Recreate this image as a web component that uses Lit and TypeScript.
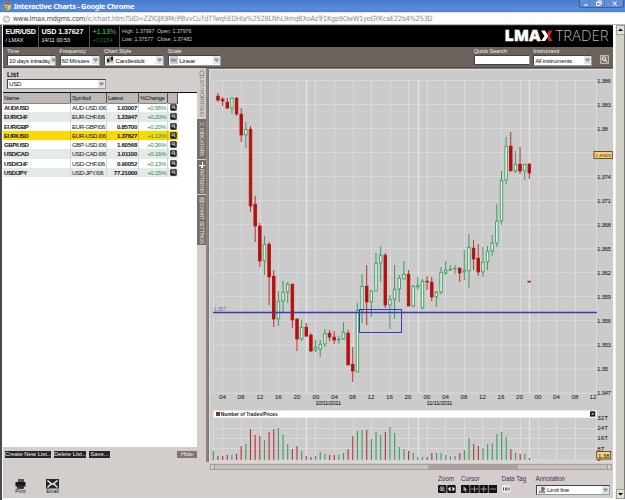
import { LitElement, html, svg, css } from "lit";
import { customElement, property } from "lit/decorators.js";

type Candle = [color: "r" | "g", high: number, low: number, top: number, bottom: number];

const CANDLES: Candle[] = [
  ["r", 93, 102, 96, 100], ["r", 97, 106, 99, 101], ["r", 98, 109, 102, 108], ["g", 97, 114, 98, 108],
  ["r", 97, 116, 98, 114], ["r", 108, 142, 114, 135], ["g", 122, 148, 129, 135], ["r", 126, 212, 129, 206],
  ["r", 196, 242, 204, 226], ["r", 223, 267, 226, 261], ["g", 236, 275, 244, 261], ["r", 242, 305, 244, 277],
  ["r", 270, 327, 276, 319], ["g", 291, 326, 301, 319], ["g", 281, 312, 292, 301], ["g", 282, 303, 284, 292],
  ["r", 284, 328, 284, 320], ["r", 318, 351, 319, 339], ["g", 320, 341, 327, 339], ["r", 323, 337, 327, 336],
  ["r", 333, 352, 335, 351], ["g", 340, 352, 347, 350], ["g", 340, 357, 344, 349], ["g", 329, 347, 333, 344],
  ["r", 330, 341, 333, 337], ["r", 331, 344, 337, 340], ["g", 336, 344, 339, 340], ["g", 322, 340, 332, 339],
  ["r", 330, 365, 333, 365], ["r", 347, 382, 364, 371], ["g", 303, 372, 310, 372], ["g", 274, 323, 286, 310],
  ["r", 265, 325, 286, 302], ["g", 290, 317, 291, 302], ["g", 253, 291, 263, 291], ["g", 246, 282, 255, 263],
  ["r", 253, 308, 255, 305], ["g", 295, 329, 299, 305], ["g", 265, 319, 289, 299], ["g", 275, 302, 278, 289],
  ["g", 261, 279, 274, 279], ["r", 270, 306, 274, 306], ["g", 285, 307, 286, 306], ["g", 277, 290, 285, 287],
  ["g", 279, 309, 281, 308], ["r", 276, 290, 281, 282], ["r", 277, 301, 282, 297], ["g", 291, 307, 292, 297],
  ["g", 267, 294, 272, 292], ["g", 261, 275, 270, 273], ["g", 265, 271, 269, 270], ["g", 265, 274, 268, 269],
  ["r", 267, 282, 268, 273], ["g", 250, 280, 270, 272], ["g", 234, 288, 247, 271], ["r", 240, 270, 248, 259],
  ["r", 244, 276, 258, 272], ["g", 247, 277, 262, 272], ["g", 246, 270, 251, 262], ["g", 235, 256, 243, 251],
  ["g", 204, 247, 221, 243], ["g", 171, 225, 180, 221], ["g", 137, 184, 146, 180], ["r", 132, 171, 146, 171],
  ["g", 151, 173, 164, 171], ["r", 147, 174, 164, 171], ["g", 164, 180, 164, 171], ["r", 163, 179, 164, 173],
];

const VOLUMES =
  "g9 r4 r4 r5 g5 r6 r14 g16 r31 r25 r24 g20 r28 r31 g32 g25 g16 r11 r14 g9 r4 r3 g4 g8 g6 r5 r5 g5 g7 r11 r24 g29 g30 r30 g21 g28 g25 r28 g33 g27 g13 g11 r9 g7 g3 g3 r3 r7 g7 g7 g5 g4 g4 r7 g10 g22 r16 r14 g12 g16 g17 g26 g28 g23 r11 g7 r6 g6 r2".split(" ");

const GRID_X = [213.5, 222.5, 241.5, 260.5, 278.5, 297.5, 315.5, 334.5, 353.5, 371.5, 390.5, 408.5, 427.5, 445.5, 464.5, 482.5, 501.5, 520.5, 538.5, 556.5, 575.5, 596.5];
const DAY_X = [306.5, 418.5, 529.5];
const HOURS = ["04", "08", "12", "16", "20", "00", "04", "08", "12", "16", "20", "00", "04", "08", "12", "16", "20", "00", "04", "08", "12"];
const HOUR_X = [222.5, 241, 260, 278.3, 297, 316, 334.5, 352.5, 371, 389.5, 408, 427, 445.5, 464, 482.5, 501, 519.5, 538, 556.5, 575, 593];
const PRICES = ["1.386", "1.383", "1.38", "1.377", "1.374", "1.371", "1.368", "1.365", "1.362", "1.359", "1.356", "1.353", "1.35", "1.347"];

const ROWS = [
  ["AUD/USD", "AUD-USD.I06", "1.03007", "+0.95%"],
  ["EUR/CHF", "EUR-CHF.I06", "1.23947", "+0.20%"],
  ["EUR/GBP", "EUR-GBP.I06", "0.85700", "+0.20%"],
  ["EUR/USD", "EUR-USD.I06", "1.37627", "+1.13%"],
  ["GBP/USD", "GBP-USD.I06", "1.60568", "+0.36%"],
  ["USD/CAD", "USD-CAD.I06", "1.01100", "+0.16%"],
  ["USD/CHF", "USD-CHF.I06", "0.90052", "+0.13%"],
  ["USD/JPY", "USD-JPY.I06", "77.21000", "+0.15%"],
];

@customElement("price-chart")
export class PriceChart extends LitElement {
  static styles = css`
    :host { display: block; width: 405px; height: 394px; }
    svg { display: block; font-family: "Liberation Sans", Arial, sans-serif; }
    .bg { fill: #cbcbcb; }
    .frame { fill: none; stroke: #7d746e; }
    .grid { stroke: #dadada; stroke-width: 1; }
    .day { stroke: #e6e6e6; stroke-width: 1.4; }
    .r { stroke: #bb3030; fill: #b80d0d; }
    rect.r { stroke: #b41212; }
    .g { stroke: #3f9c62; fill: #e6f1e8; }
    .axis { font-size: 6.2px; fill: #111; }
    .limit { stroke: #3a3ab4; stroke-width: 1.3; fill: none; }
    .zone { stroke: #3a3ab4; stroke-width: 1; fill: none; }
    .tiny { font-size: 5px; fill: #777; }
    .tag { fill: #fbd07c; stroke: #5b431c; stroke-width: .9; }
    .price { font-size: 4.4px; }
    .head { font-size: 5.9px; font-weight: bold; fill: #222; }
  `;

  private candle([c, high, low, top, bottom]: Candle, i: number) {
    const x = 218 + i * 4.647;
    return svg`<line class=${c} x1=${x} x2=${x} y1=${high} y2=${low} stroke-width="1"/>
      <rect class=${c} x=${x - 1.25} y=${top + 0.3} width="2.5" height=${Math.max(bottom - top - 0.4, 0.5)} stroke-width=".9"/>`;
  }

  render() {
    return html`<svg width="405" height="394" viewBox="208 68 405 394">
      <rect class="bg" x="208" y="68" width="405" height="394"/>
      <path class="frame" d="M208.5 462V68.5H613"/>
      <path stroke="#e4e2e0" fill="none" d="M209.5 461.5V69.5H613M209 461.5H613"/>
      ${PRICES.map((_, i) => svg`<line class="grid" x1="213" x2="597" y1=${80.5 + i * 24.04} y2=${80.5 + i * 24.04}/>`)}
      ${GRID_X.map((x) => svg`<line class="grid" x1=${x} x2=${x} y1="80" y2="393"/><line class="grid" x1=${x} x2=${x} y1="418" y2="460"/>`)}
      ${DAY_X.map((x) => svg`<line class="day" x1=${x} x2=${x} y1="80" y2="393"/><line class="day" x1=${x} x2=${x} y1="418" y2="460"/>`)}
      ${[428.5, 438.5, 448.5, 459.5].map((y) => svg`<line class="grid" x1="213" x2="597" y1=${y} y2=${y}/>`)}
      ${CANDLES.map((c, i) => this.candle(c, i))}
      <rect x="527.5" y="280.8" width="3.5" height="1.7" fill="#b81818"/>
      <path class="limit" d="M213 312.5H597"/>
      <rect class="zone" x="359.5" y="309.5" width="42" height="23"/>
      <text class="tiny" x="214" y="311.3" textLength="12">1.357</text>
      ${PRICES.map((p, i) => svg`<text class="axis" x="597" y=${82.6 + i * 24.04} textLength=${p.length === 5 ? 14 : 11}>${p}</text>`)}
      <rect class="tag" x="594" y="151.5" width="18.3" height="7"/>
      <text class="axis price" x="595.5" y="156.8" textLength="15.3">1.37623</text>
      ${HOURS.map((h, i) => svg`<text class="axis" text-anchor="middle" x=${HOUR_X[i]} y="399">${h}</text>`)}
      <text class="axis" x="315.3" y="405.2" textLength="26">10/11/2011</text>
      <text class="axis" x="426.5" y="405.2" textLength="26">11/11/2011</text>
      <rect x="213.5" y="410.5" width="383.5" height="7.2" fill="#fff"/>
      <rect x="216" y="412" width="4" height="4" fill="#a02020"/>
      <path d="M216 414h4v2h-4z" fill="#1c6b35"/>
      <text class="head" x="220.7" y="416.2" textLength="57" lengthAdjust="spacingAndGlyphs">Number of Trades/Prices</text>
      <rect x="590" y="411.3" width="5.3" height="5.3" fill="#151515"/>
      <path d="M591.5 412.8l2.3 2.3m0-2.3l-2.3 2.3" stroke="#fff" stroke-width=".7"/>
      ${VOLUMES.map((v, i) => {
        const x = 213.3 + i * 4.65;
        const h = Number(v.slice(1));
        return svg`<line class=${v[0]} x1=${x} x2=${x} y1=${460 - h} y2="460" stroke-width="1.1"/>`;
      })}
      ${["32T", "24T", "16T", "8T", "0"].map((t, i) => svg`<text class="axis" x="597.3" y=${419.6 + i * 10.35}>${t}</text>`)}
      <rect class="tag" x="596.7" y="451.5" width="14" height="7.5"/>
      <text class="axis" x="598" y="457.6" textLength="11.5">1.38</text>
    </svg>`;
  }
}

@customElement("drop-box")
export class DropBox extends LitElement {
  @property() value = "";
  @property() icon = "";
  static styles = css`
    :host { display: flex; align-items: center; box-sizing: border-box; height: 10.5px; background: #fff; border: 1px solid #444; border-right-color: #999; border-bottom-color: #999;
      font: 6.2px "Liberation Sans", Arial, sans-serif; letter-spacing: -.25px; color: #111; white-space: nowrap; overflow: hidden; padding-left: 1px; }
    .text { flex: 1; }
    .arrow { width: 7px; height: 8px; background: #dce6e8; display: block; flex: none; }
    .ico { width: 8px; height: 8px; margin-right: 1.5px; display: block; flex: none; }
  `;
  render() {
    return html`
      ${this.icon === "candle" ? html`<svg class="ico" viewBox="0 0 8 8"><rect width="8" height="8" fill="#ddd"/><path d="M2 2v5M4 1v5M6 0v6" stroke="#222" stroke-width=".8"/><path d="M1 3h2v3H1zM5 1h2v3H5z" fill="#222"/></svg>` : ""}
      ${this.icon === "abc" ? html`<svg class="ico" viewBox="0 0 8 8"><rect width="8" height="8" fill="#c9d3da"/><path d="M.8 3h1.6v2.4H1V4.2h1.4M3.3 1.8v3.6h1.4V3.4H3.3M7.2 3.2H5.6v2.2h1.6" fill="none" stroke="#67737c" stroke-width=".6"/></svg>` : ""}
      ${this.icon === "line" ? html`<svg class="ico" viewBox="0 0 8 8"><rect width="8" height="8" fill="#dde3e6"/><path d="M1 6h6M4 1v4M4 2h2v2H4" stroke="#222" stroke-width=".8" fill="none"/></svg>` : ""}
      <span class="text">${this.value}</span>
      <svg class="arrow" viewBox="0 0 7 8"><path d="M1.8 3h3.6L3.6 5.6z" fill="#cfd8da" stroke="#4c5c60" stroke-width=".7"/></svg>`;
  }
}

@customElement("app-root")
export class AppRoot extends LitElement {
  static styles = css`
    :host { display: block; width: 625px; height: 500px; overflow: hidden; background: #fff; font: 6.5px/8px "Liberation Sans", Arial, sans-serif; color: #111; }
    * { box-sizing: border-box; }
    .window { height: 500px; display: grid; grid-template-rows: 12px 13px 475px; white-space: nowrap; }
    .title { display: flex; align-items: center; background: linear-gradient(#4478cc, #5b8ddd 70%, #4f7fce); color: #fff; padding-left: 3px; }
    .title svg { width: 8px; height: 9px; margin-right: 3px; }
    .title b { flex: 1; font: bold 7.3px/10px "Noto Sans", sans-serif; letter-spacing: -.24px; }
    .controls { display: flex; align-self: flex-start; height: 8px; width: 45px; margin-right: 1px; border: 1px solid #3561a9; border-top: 0; border-radius: 0 0 3px 3px; background: #638fd7; }
    .controls svg { width: 43px; height: 7px; margin: 0; }
    .url { display: flex; align-items: center; background: #fdfdfe; border-bottom: 1px solid #b7b7bb; border-top: 1px solid #dce6f5; padding-left: 3px; color: #8a8a8a; font: 7.2px/10px "DejaVu Sans Condensed", "DejaVu Sans", sans-serif; font-stretch: condensed; letter-spacing: -.17px; }
    .url svg { width: 7px; height: 8px; margin-right: 3px; }
    .host { color: #444; }
    .page { display: grid; grid-template-columns: 610px 2px 10px; background: #fff; border-left: 2px solid #484a50; padding-left: 1px; }
    .main { height: 473px; background: #d3cecb; border-top: 1px solid #2a2a2a; }
    .ticker { height: 21px; background: #000; color: #e9e9e9; display: flex; }
    .cell { padding: 0 2.5px; border-right: 1px solid #555; font-size: 5.5px; line-height: 8.5px; }
    .cell:first-child { width: 36px; } .cell:nth-child(2) { width: 51px; } .cell:nth-child(3) { width: 29.5px; }
    .cell:nth-child(4) { flex: 1; border: 0; font-size: 5.2px; color: #ccc; padding-top: 1px; line-height: 8px; }
    .cell b { display: block; font-size: 7.2px; line-height: 9px; padding-top: 1px; color: #fff; }
    .cell:first-child b { letter-spacing: -.3px; } .cell:nth-child(2) b { letter-spacing: -.12px; }
    .cell:nth-child(3) b { letter-spacing: -.2px; }
    .cell .up { color: #2f9c38; } .up2 { color: #24752b; }
    .pair { display: flex; gap: 2px; } .pair span { width: 33px; }
    .brand { display: block; width: 108px; height: 21px; }
    .tools { height: 21px; background: #6c625c; border-bottom: 1px solid #574e49; display: flex; padding: 1px 4px 0; color: #f1eeec; }
    .field { display: flex; flex-direction: column; line-height: 7px; font-size: 5.8px; letter-spacing: -.12px; }
    .search { height: 10px; background: #fff; border: 1px solid #444; border-right-color: #999; }
    .find { display: block; width: 9px; height: 9px; margin: 7px 0 0 8px; }
    .body { display: grid; grid-template-columns: 194px 11px 405px; height: 379px; }
    .listhead { height: 24px; padding: 3.5px 4px 0; }
    .listhead b { display: block; font-size: 6.5px; line-height: 6px; margin-bottom: 1px; }
    .listhead drop-box { width: 99px; }
    .table { background: #fff; height: 355px; border-top: 1.5px solid #111; }
    .row { display: grid; grid-template-columns: 68px 36px 32px 29px 10px; height: 9.3px; width: 175px; line-height: 9.3px; font-size: 6.1px; }
    .row span { border-right: 1px solid #d5d9d9; padding: 0 1px; letter-spacing: -.33px; }
    .row:nth-child(odd) { background: #e4e9e9; }
    .row.thead { background: #beb8b5; height: 10px; line-height: 10px; }
    .row.thead span { border-right: 1px solid #555; border-bottom: 1px solid #888; letter-spacing: -.3px; }
    .row.sel { background: #fcd800; } .row.sel span { border-color: #dcb800; }
    .row .name { font-weight: bold; letter-spacing: -.48px; }
    .row .sym { letter-spacing: -.38px; }
    .row .last { text-align: right; font-weight: bold; letter-spacing: -.28px; }
    .row .chg { text-align: right; color: #159447; }
    .row svg { width: 7px; height: 7px; margin: 1px 1.5px; display: block; }
    .tabs { height: 394px; border-right: 2px solid #8d847e; display: flex; flex-direction: column; gap: 1px; }
    .tab { display: flex; align-items: center; writing-mode: vertical-rl; width: 9px; background: #786e69; color: #e9e4e1; font-size: 5px; line-height: 9px; letter-spacing: -.25px; gap: 1.5px; padding-top: 1.5px; }
    .tab svg { width: 6px; height: 6px; flex: none; }
    .tab.on { background: #d3cecb; color: #77706b; }
    .lower { display: grid; grid-template-columns: 205px 405px; height: 51px; }
    .left { width: 197px; }
    .buttons { display: flex; gap: 3px; padding: 4px 2px 0; height: 22px; align-items: flex-start; }
    .btn { height: 6.5px; background: #25262a; color: #eee; line-height: 6.5px; font-size: 5.9px; text-align: center; }
    .hide { background: #82756f; margin-left: auto; width: 20px; margin-right: 1px; }
    .acts { display: flex; padding-left: 11px; gap: 20px; margin-top: 8.5px; }
    .act { width: 13px; display: flex; flex-direction: column; align-items: center; font-size: 5px; line-height: 5px; }
    .act svg { width: 13px; height: 11px; }
    .right { margin-top: 15px; display: flex; flex-direction: column; }
    .hbar { height: 6px; background: #c8c2be; border: 1px solid #a49d98; margin: 2px 1px 0 2px; display: flex; }
    .thumb { width: 90px; margin-left: 213px; background: #a9a29e; }
    .end { width: 4px; background: #d3cecb; border-right: 1px solid #999; } .end.r { margin-left: auto; border: 0; border-left: 1px solid #999; }
    .opts { display: flex; padding: 5px 0 0 230px; color: #54285c; font-size: 6.3px; letter-spacing: -.06px; }
    .opt { display: flex; flex-direction: column; line-height: 8px; gap: 1.5px; }
    .opt svg { display: block; height: 8px; }
    .vbar { background: #d2cfc6; border-left: 1px solid #f0eee8; border-right: 1px solid #777; display: flex; flex-direction: column; justify-content: space-between; height: 474px; }
    .vbar svg { width: 9px; height: 10px; display: block; }
    .w-time { width: 49px; } .w-freq { width: 40.5px; margin-left: 3.5px; } .w-style { width: 60px; margin-left: 4px; }
    .w-scale { width: 53px; margin-left: 4px; } .w-search { width: 56px; margin-left: 253px; } .w-instr { width: 59px; margin-left: 3.5px; }
    .t-50 { height: 50px; } .t-40 { height: 40px; } .t-34 { height: 34px; }
    .b-46 { width: 46px; } .b-32 { width: 32px; } .b-21 { width: 21px; }
    .mail { margin-left: -1px; }
    .o-zoom { width: 23px; } .o-cursor { width: 40.5px; } .o-tag { width: 34px; } .o-note { width: 74px; }
  `;

  render() {
    return html`<div class="window">
      <div class="title">
        <svg viewBox="0 0 8 9"><circle cx="4" cy="4.5" r="4" fill="#e9c52b"/><path d="M.5 2.5A4 4 0 0 1 7.5 2.7L4 3z" fill="#d63a2f"/><path d="M.4 2.6A4 4 0 0 0 4 8.5L5 5.5 2.5 5z" fill="#3da34d"/><circle cx="4" cy="4.5" r="1.6" fill="#4b83d8" stroke="#fff" stroke-width=".6"/></svg>
        <b>Interactive Charts - Google Chrome</b>
        <div class="controls"><svg viewBox="0 0 43 7"><path d="M9.500 0v7M24.500 0v7" stroke="#4474bf" opacity=".6"/><path d="M4 5h4M16.500 2.500h3.500v3h-3.500zM18 2.500v-1.500h3.500v3h-1.500M33 1.500l3.500 4M36.500 1.500l-3.500 4" fill="none" stroke="#fff" stroke-width="1"/></svg></div>
      </div>
      <div class="url"><svg viewBox="0 0 7 8"><circle cx="3.500" cy="4" r="3" fill="#fff" stroke="#888" stroke-width=".8"/><path d="M2 2.500l1.500 1-1 2M4 1.500l1 2" stroke="#999" stroke-width=".6" fill="none"/></svg><span class="host">www.lmax.mdgms.com</span>/ic/chart.htm?SID=ZZIGJK9McPBvvCuTdTTwqhEDHIa%252BLNhL9mqBXoAzTr1Kgp9OwW1yoGYKcaE22b4%253D</div>
      <div class="page">
        <div class="main">
          <div class="ticker">
            <div class="cell"><b>EUR/USD</b>/ LMAX</div>
            <div class="cell"><b>USD 1.37627</b>14/11 00:53</div>
            <div class="cell"><b class="up">+1.13%</b><span class="up2">+0.0154</span></div>
            <div class="cell"><div class="pair"><span>High: 1.37997</span><span>Open: 1.37976</span></div><div class="pair"><span>Low: 1.37577</span><span>Close: 1.37482</span></div></div>
            <svg class="brand" viewBox="0 0 108 21"><text x="-.5" y="15.200" font-family="Open Sans" font-weight="800" font-size="15" textLength="36" lengthAdjust="spacingAndGlyphs" fill="#fff" stroke="#fff" stroke-width=".4">LMA</text><path d="M36 4.500h4l3.500 5.500-3.500 5h-4l3.500-5z" fill="#fff"/><path d="M47.500 4.500h-3.500l-2 3 1.500 2.500-1.500 2.500 1.700 2.500h4l-3.200-5z" fill="#d8202a"/><text x="50.500" y="15.200" font-family="Open Sans" font-weight="300" font-size="15" textLength="53" lengthAdjust="spacingAndGlyphs" fill="#bbb">TRADER</text></svg>
          </div>
          <div class="tools">
            <div class="field w-time">Time<drop-box value="10 days intraday"></drop-box></div>
            <div class="field w-freq">Frequency<drop-box value="60 Minutes"></drop-box></div>
            <div class="field w-style">Chart Style<drop-box icon="candle" value="Candlestick"></drop-box></div>
            <div class="field w-scale">Scale<drop-box icon="abc" value="Linear"></drop-box></div>
            <div class="field w-search">Quick Search<div class="search"></div></div>
            <div class="field w-instr">Instrument<drop-box value="All instruments"></drop-box></div>
            <svg class="find" viewBox="0 0 9 9"><path d="M.5.5h8v8h-8z" fill="#857b75" stroke="#c3bbb6"/><circle cx="3.800" cy="3.600" r="1.700" fill="none" stroke="#fff"/><path d="M5 5l2.300 2.300" stroke="#fff"/></svg>
          </div>
          <div class="body">
            <div>
              <div class="listhead"><b>List</b><drop-box value="USD"></drop-box></div>
              <div class="table">
                <div class="row thead"><span>Name</span><span>Symbol</span><span>Latest</span><span>%Change</span><span></span></div>
                ${ROWS.map((r) => html`<div class="row ${r[0] === "EUR/USD" ? "sel" : ""}"><span class="name">${r[0]}</span><span class="sym">${r[1]}</span><span class="last">${r[2]}</span><span class="chg">${r[3]}</span><svg viewBox="0 0 7 7"><rect x=".3" y=".3" width="6.400" height="6.400" rx="1" fill="#151515"/><path d="M2 1.800h2.800v2H2zM4 3.500l1.500 1.800" fill="none" stroke="#eee" stroke-width=".8"/></svg></div>`)}
              </div>
            </div>
            <div class="tabs">
              <div class="tab on t-50"><svg viewBox="0 0 6 6"><path d="M1 5.500V1.500l3-1 1 2v3z" fill="none" stroke="#777" stroke-width=".7"/></svg>LIST / PORTFOLIO</div>
              <div class="tab t-40"><svg viewBox="0 0 6 6"><path d="M.5 1l2 2-2 2M5.500 1l-2 2 2 2" fill="none" stroke="#ddd" stroke-width=".7"/></svg>INDICATORS</div>
              <div class="tab t-34"><svg viewBox="0 0 6 6"><path d="M0 3h3V0h1v3h2v1H4v2H2V4H0z" fill="#fff"/></svg>PATTERNS</div>
              <div class="tab t-50"><svg viewBox="0 0 6 6"><path d="M0 1h6M0 3h6M0 5h6M2 0v6M4 0v6" stroke="#ddd" stroke-width=".6"/></svg>CHART SETTINGS</div>
            </div>
            <price-chart></price-chart>
          </div>
          <div class="lower">
            <div class="left">
              <div class="buttons"><div class="btn b-46">Create New List...</div><div class="btn b-32">Delete List...</div><div class="btn b-21">Save...</div><div class="btn hide">Hide</div></div>
              <div class="acts">
                <div class="act"><svg viewBox="0 0 13 11"><path d="M4 1h6v3H4z" fill="#555"/><path d="M1.500 4h10v4.500h-10z" fill="#17191b"/><path d="M3.500 7h6v3.500h-6z" fill="#303437" stroke="#111" stroke-width=".6"/></svg>Print</div>
                <div class="act mail"><svg viewBox="0 0 13 11"><rect y="1" width="13" height="9.500" fill="#25292b"/><path d="M1.500 2.500l5 4 5-4M1.500 9.500l3.500-3.500M11.500 9.500l-3.500-3.500" stroke="#fff" stroke-width="1.200" fill="none"/></svg>Email</div>
              </div>
            </div>
            <div class="right">
              <div class="hbar"><div class="end"></div><div class="thumb"></div><div class="end r"></div></div>
              <div class="opts">
                <div class="opt o-zoom">Zoom<svg width="18" viewBox="0 0 18 8"><rect width="8.500" height="8" rx="1" fill="#111"/><rect x="9.200" width="8.500" height="8" rx="1" fill="#111"/><circle cx="4" cy="3.700" r="2" fill="none" stroke="#ddd" stroke-width=".8"/><path d="M5.500 5.200L7 6.800M3 3.700h2M4 2.700v2" stroke="#ddd" stroke-width=".7"/><path d="M11 4h1.500M14.500 4h1.500M12.300 2v4l-2-2zM14.700 2v4l2-2z" fill="#fff" stroke="#fff" stroke-width=".4"/></svg></div>
                <div class="opt o-cursor">Cursor<svg width="36" viewBox="0 0 36 8"><path d="M0 0h8.500v8H0zM9.200 0h8.500v8H9.200zM18.400 0h8.500v8h-8.500zM27.600 0h8.400v8h-8.400z" fill="#111"/><path d="M2.500 1l4 4H4.500l1 2-1 .3-1-2-1 1z" fill="#aaa"/><path d="M10 4h7M13.500 1v6M19.500 4h6.500M22.700 1v6M28.700 4h6.300" stroke="#ccc" stroke-width=".7"/></svg></div>
                <div class="opt o-tag">Data Tag<svg width="9" viewBox="0 0 9 8"><rect width="8.500" height="7.500" rx="1" fill="#eee"/><path d="M1.500 2.500v3M3.500 2.500v3M5 2.500v3M7 2.500v3" stroke="#333" stroke-width=".9"/></svg></div>
                <div class="opt o-note">Annotation<drop-box icon="line" value="Limit line"></drop-box></div>
              </div>
            </div>
          </div>
        </div>
        <div></div>
        <div class="vbar"><svg viewBox="0 0 9 10"><path d="M.5.500h8v9h-8z" fill="#e2dfd8" stroke="#777" stroke-width=".6"/><path d="M2 6h5L4.500 3.500z"/></svg><svg viewBox="0 0 9 10"><path d="M.5.500h8v9h-8z" fill="#e2dfd8" stroke="#777" stroke-width=".6"/><path d="M2 4h5L4.500 6.500z"/></svg></div>
      </div>
    </div>`;
  }
}
